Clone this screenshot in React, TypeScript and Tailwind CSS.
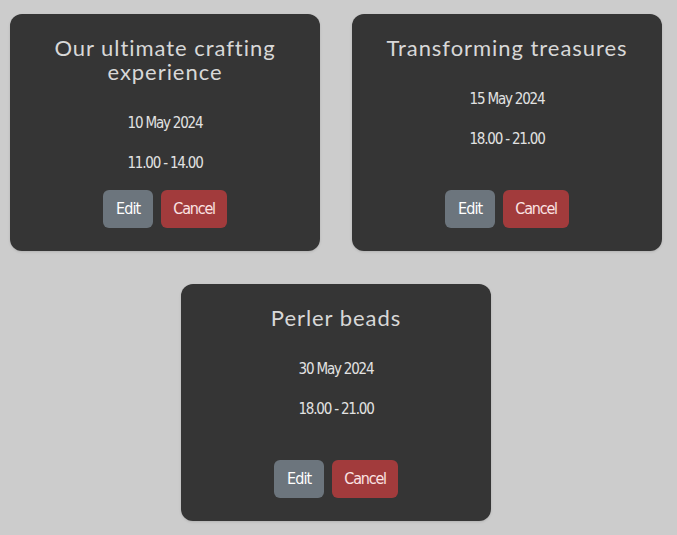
import React from 'react';

interface Workshop {
  title: string;
  date: string;
  time: string;
}

const workshops: Workshop[] = [
  { title: 'Our ultimate crafting experience', date: '10 May 2024', time: '11.00 - 14.00' },
  { title: 'Transforming treasures', date: '15 May 2024', time: '18.00 - 21.00' },
  { title: 'Perler beads', date: '30 May 2024', time: '18.00 - 21.00' },
];

function WorkshopCard({ workshop }: { workshop: Workshop }) {
  return (
    <div className="flex h-[237px] w-[310px] flex-col items-center rounded-xl bg-[#353535] px-5 pt-[22px] pb-[23px] text-center shadow-sm">
      <h2 className="text-[22px] leading-[24px] tracking-[0.95px] text-[#d8d8d8] [font-family:Lato,'Noto_Sans',sans-serif]">
        {workshop.title}
      </h2>
      <p className="mt-[29px] text-[15px] leading-[20px] tracking-[-1.2px] text-[#e2e2e2] [font-family:'DejaVu_Sans_Condensed',sans-serif]">
        {workshop.date}
      </p>
      <p className="mt-[20px] text-[15px] leading-[20px] tracking-[-1.2px] text-[#e2e2e2] [font-family:'DejaVu_Sans_Condensed',sans-serif]">
        {workshop.time}
      </p>
      <div className="mt-auto flex gap-2 text-[16px] [font-family:'DejaVu_Sans_Condensed',sans-serif]">
        <button className="h-[38px] rounded-md bg-[#6c757d] px-[13px] tracking-[-0.9px] text-white">Edit</button>
        <button className="h-[38px] rounded-md bg-[#a23b3c] px-[12px] tracking-[-1.2px] text-[#fbe3e3]">Cancel</button>
      </div>
    </div>
  );
}

export default function App() {
  return (
    <div className="min-h-[535px] bg-[#cccccc] pt-[14px]">
      <div className="ml-[10px] flex w-[652px] flex-wrap justify-center gap-x-8 gap-y-[33px]">
        {workshops.map((w) => (
          <WorkshopCard key={w.title} workshop={w} />
        ))}
      </div>
    </div>
  );
}
